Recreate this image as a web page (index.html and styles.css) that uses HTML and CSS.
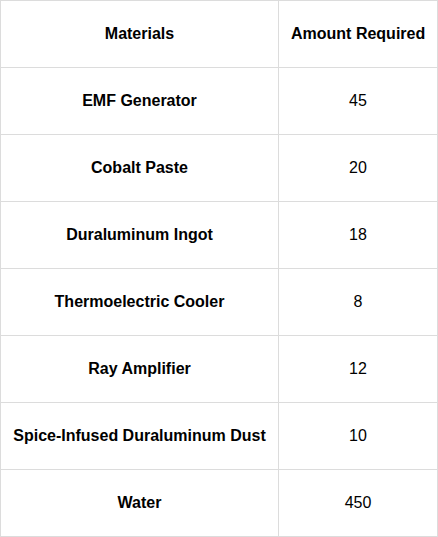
FILE: index.html
```html
<!DOCTYPE html>
<html>
<head>
<meta charset="utf-8">
<link rel="stylesheet" href="styles.css">
</head>
<body>
<table class="mats">
  <colgroup><col class="c1"><col class="c2"></colgroup>
  <thead>
    <tr><th>Materials</th><th>Amount Required</th></tr>
  </thead>
  <tbody>
    <tr><td class="name">EMF Generator</td><td>45</td></tr>
    <tr><td class="name">Cobalt Paste</td><td>20</td></tr>
    <tr><td class="name">Duraluminum Ingot</td><td>18</td></tr>
    <tr><td class="name">Thermoelectric Cooler</td><td>8</td></tr>
    <tr><td class="name">Ray Amplifier</td><td>12</td></tr>
    <tr><td class="name">Spice-Infused Duraluminum Dust</td><td>10</td></tr>
    <tr><td class="name">Water</td><td>450</td></tr>
  </tbody>
</table>
</body>
</html>
```
FILE: styles.css
```css
html, body {
  margin: 0;
  padding: 0;
  background: #fff;
}
.mats {
  border-collapse: collapse;
  table-layout: fixed;
  width: 437px;
  font-family: "Liberation Sans", Arial, sans-serif;
  font-size: 16px;
  color: #000;
}
.c1 { width: 278px; }
.c2 { width: 159px; }
.mats th,
.mats td {
  border: 1px solid #dcdcdc;
  padding: 24px 12px;
  line-height: 18px;
  text-align: center;
  white-space: nowrap;
}
.mats th { font-weight: bold; }
.mats td { font-weight: normal; }
.mats td.name { font-weight: bold; }
```
